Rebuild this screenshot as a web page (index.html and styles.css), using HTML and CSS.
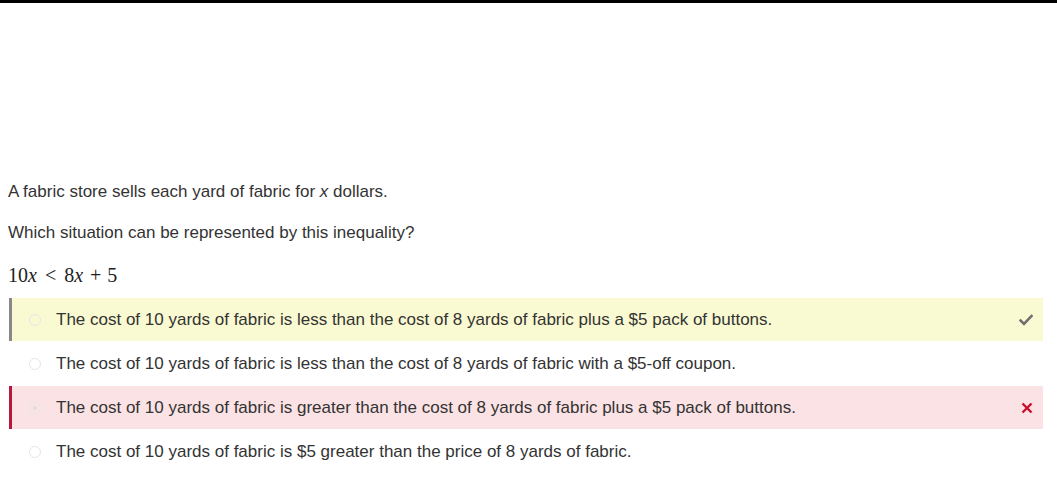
FILE: index.html
```html
<!DOCTYPE html>
<html>
<head>
<meta charset="utf-8">
<link rel="stylesheet" href="styles.css">
</head>
<body>
<div class="topbar"></div>
<main class="content">
  <p class="stem">A fabric store sells each yard of fabric for <i>x</i> dollars.</p>
  <p class="stem q">Which situation can be represented by this inequality?</p>
  <p class="math"><span>10</span><i>x</i><span class="rel">&lt;</span><span>8</span><i>x</i><span class="bin">+</span><span>5</span></p>
  <ul class="options">
    <li class="option correct">
      <span class="radio"></span>
      <span class="label">The cost of 10 yards of fabric is less than the cost of 8 yards of fabric plus a $5 pack of buttons.</span>
      <svg class="mark" width="14" height="12" viewBox="0 0 14 12"><path d="M1.5 6.5 L5 10 L12.5 2" fill="none" stroke="#6f6f6f" stroke-width="2.6" stroke-linecap="square"/></svg>
    </li>
    <li class="option">
      <span class="radio"></span>
      <span class="label">The cost of 10 yards of fabric is less than the cost of 8 yards of fabric with a $5-off coupon.</span>
    </li>
    <li class="option wrong">
      <span class="radio checked"></span>
      <span class="label">The cost of 10 yards of fabric is greater than the cost of 8 yards of fabric plus a $5 pack of buttons.</span>
      <svg class="mark" width="12" height="12" viewBox="0 0 12 12"><path d="M1.5 1.5 L10.5 10.5 M10.5 1.5 L1.5 10.5" fill="none" stroke="#c8102e" stroke-width="2.4"/></svg>
    </li>
    <li class="option">
      <span class="radio"></span>
      <span class="label">The cost of 10 yards of fabric is $5 greater than the price of 8 yards of fabric.</span>
    </li>
  </ul>
</main>
</body>
</html>
```
FILE: styles.css
```css
html, body {
  margin: 0;
  padding: 0;
  background: #fff;
}
body {
  font-family: "Liberation Sans", Arial, sans-serif;
  color: #333;
  font-size: 17px;
}
.topbar {
  height: 3px;
  background: #000;
}
.content {
  padding: 179px 14px 0 8px;
}
.stem {
  margin: 0;
  line-height: 20px;
}
.stem i {
  font-style: italic;
}
.q {
  margin-top: 21px;
}
.math {
  margin: 21px 0 0 0;
  font-family: "Liberation Serif", "Times New Roman", serif;
  font-size: 20px;
  line-height: 22px;
  color: #222;
}
.math i {
  margin-right: 1px;
}
.math .rel {
  margin: 0 8px 0 7px;
}
.math .bin {
  margin: 0 6px;
}
.options {
  list-style: none;
  margin: 12px 0 0 1px;
  padding: 0;
}
.option {
  display: flex;
  align-items: center;
  height: 43px;
  padding-left: 20px;
  padding-right: 10px;
  border-left: 3px solid transparent;
  margin-bottom: 1px;
}
.option.correct {
  background: #fafad2;
  border-left-color: #888;
}
.option.wrong {
  background: #fbe2e4;
  border-left-color: #b51a3e;
}
.radio {
  width: 12px;
  height: 12px;
  border: 1px solid #e6e6e6;
  border-radius: 50%;
  flex: none;
  box-sizing: border-box;
  margin-left: -3px;
  position: relative;
}
.radio.checked::after {
  content: "";
  position: absolute;
  left: 3px;
  top: 3px;
  width: 4px;
  height: 4px;
  border-radius: 50%;
  background: #e0e0e0;
}
.label {
  margin-left: 15px;
  flex: 1;
  line-height: 20px;
}
.mark {
  flex: none;
  margin-right: 0;
}
```
